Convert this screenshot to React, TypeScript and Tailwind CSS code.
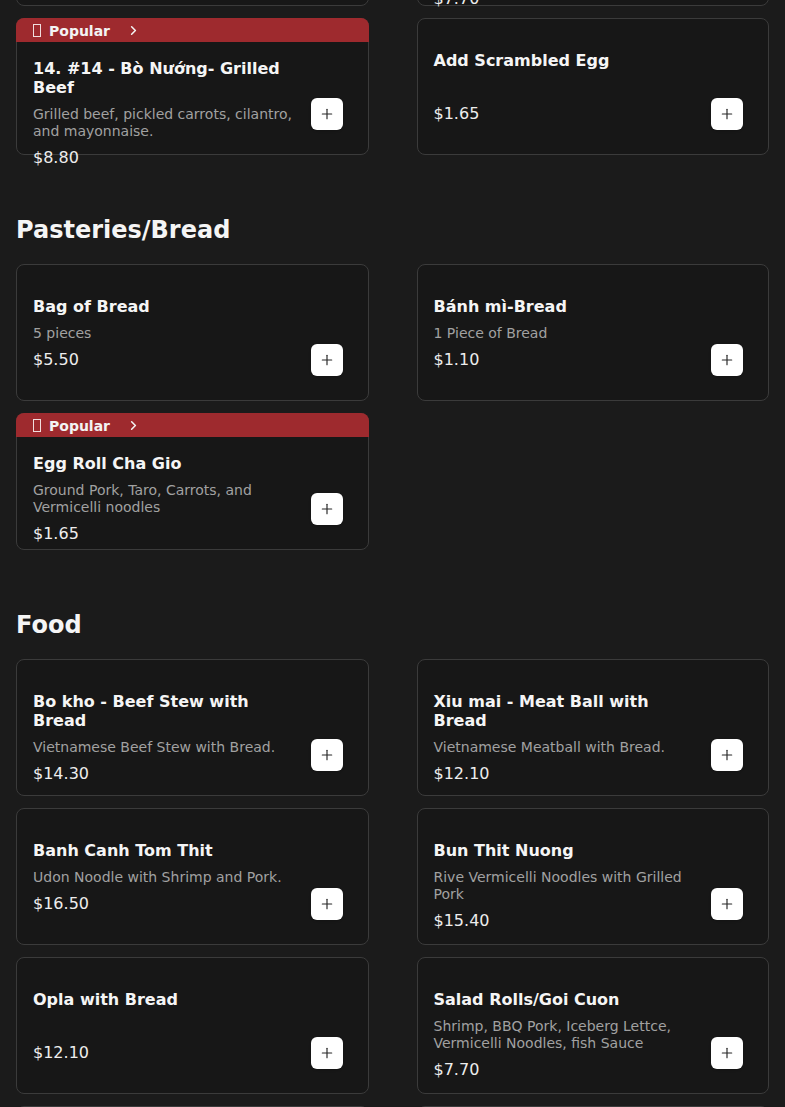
import { ChevronRight, Plus } from "lucide-react";

type Item = {
  name: string;
  desc?: string;
  price: string;
  popular?: boolean;
};

type Section = {
  title?: string;
  items: Item[];
};

const sections: Section[] = [
  {
    items: [
      { name: "13. #13 - Thit Nuong", desc: "Grilled pork", price: "$8.80" },
      {
        name: "Add Meat",
        desc: "Choice of grilled pork, grilled beef, grilled chicken, shredded pork or steamed shrimp on the side",
        price: "$7.70",
      },
      {
        name: "14. #14 - Bò Nướng- Grilled Beef",
        desc: "Grilled beef, pickled carrots, cilantro, and mayonnaise.",
        price: "$8.80",
        popular: true,
      },
      { name: "Add Scrambled Egg", price: "$1.65" },
    ],
  },
  {
    title: "Pasteries/Bread",
    items: [
      { name: "Bag of Bread", desc: "5 pieces", price: "$5.50" },
      { name: "Bánh mì-Bread", desc: "1 Piece of Bread", price: "$1.10" },
      {
        name: "Egg Roll Cha Gio",
        desc: "Ground Pork, Taro, Carrots, and Vermicelli noodles",
        price: "$1.65",
        popular: true,
      },
    ],
  },
  {
    title: "Food",
    items: [
      {
        name: "Bo kho - Beef Stew with Bread",
        desc: "Vietnamese Beef Stew with Bread.",
        price: "$14.30",
      },
      {
        name: "Xiu mai - Meat Ball with Bread",
        desc: "Vietnamese Meatball with Bread.",
        price: "$12.10",
      },
      {
        name: "Banh Canh Tom Thit",
        desc: "Udon Noodle with Shrimp and Pork.",
        price: "$16.50",
      },
      {
        name: "Bun Thit Nuong",
        desc: "Rive Vermicelli Noodles with Grilled Pork",
        price: "$15.40",
      },
      { name: "Opla with Bread", price: "$12.10" },
      {
        name: "Salad Rolls/Goi Cuon",
        desc: "Shrimp, BBQ Pork, Iceberg Lettce, Vermicelli Noodles, fish Sauce",
        price: "$7.70",
      },
      { name: "Pho Ga", desc: "Chicken noodle soup.", price: "$14.30" },
      { name: "Pho Tai", desc: "Rare beef noodle soup.", price: "$15.40" },
    ],
  },
];

function MenuCard({ item }: { item: Item }) {
  return (
    <div className="flex h-[137px] flex-col rounded-lg border border-[#3b3b3b] bg-[#171717]">
      {item.popular && (
        <div className="-mx-px -mt-px flex h-6 shrink-0 items-center gap-2 rounded-t-lg bg-[#9e2a2e] pl-[17px] pt-px text-sm font-bold text-[#f3f3f3]">
          <span className="inline-block h-[13px] w-[8px] border border-[#f0dede]" />
          <span>Popular</span>
          <ChevronRight size={15} strokeWidth={2.5} className="ml-2" />
        </div>
      )}
      <div
        className={
          "flex min-h-0 flex-1 gap-4 pb-6 pl-4 pr-[25px] " +
          (item.popular ? "pt-[17px]" : "pt-8")
        }
      >
        <div className="flex min-w-0 flex-1 flex-col self-start">
          <h3 className="text-base font-bold leading-[19px] text-[#f5f5f5]">
            {item.name}
          </h3>
          <p className="mt-[9px] min-h-[17px] text-sm leading-[17px] text-[#a1a1a1]">
            {item.desc}
          </p>
          <p className="mt-2 text-base leading-5 text-[#ededed]">{item.price}</p>
        </div>
        <button className="flex h-8 w-8 shrink-0 items-center justify-center self-end rounded-md bg-white text-[#262626] shadow-sm">
          <Plus size={16} strokeWidth={1.75} />
        </button>
      </div>
    </div>
  );
}

export default function App() {
  return (
    <div className="min-h-screen overflow-hidden bg-[#1b1b1b] px-4 font-['DejaVu_Sans',sans-serif]">
      <div className="-mt-[131px]">
        {sections.map((section, i) => (
          <section key={i} className={section.title ? "mt-[59px]" : ""}>
            {section.title && (
              <h2 className="mb-[18px] text-2xl font-bold leading-8 text-[#f5f5f5]">
                {section.title}
              </h2>
            )}
            <div className="grid grid-cols-2 gap-x-12 gap-y-3">
              {section.items.map((item) => (
                <MenuCard key={item.name} item={item} />
              ))}
            </div>
          </section>
        ))}
      </div>
    </div>
  );
}
